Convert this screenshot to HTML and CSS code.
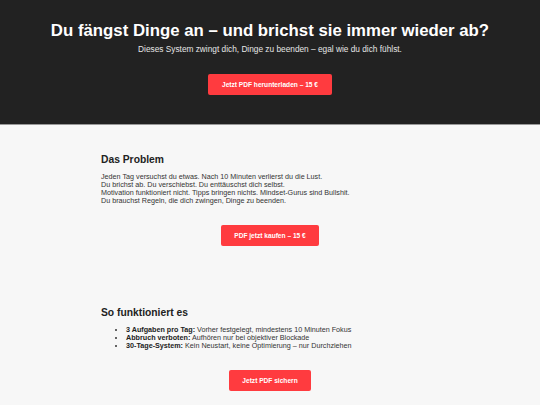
FILE: index.html
```html
<!DOCTYPE html>
<html lang="de">
  <head>
    <meta charset="UTF-8" />
    <meta name="viewport" content="width=device-width, initial-scale=1.0" />
    <title>Dinge beenden</title>
    <link rel="stylesheet" href="styles.css">
  </head>
  <body>
    <header class="hero">
      <h1>Du fängst Dinge an – und brichst sie immer wieder ab?</h1>
      <p class="hero-sub">Dieses System zwingt dich, Dinge zu beenden – egal wie du dich fühlst.</p>
      <div class="cta">
        <a class="btn" href="#">Jetzt PDF herunterladen – 15 €</a>
      </div>
    </header>

    <section class="block">
      <div class="wrap">
        <h2>Das Problem</h2>
        <p class="text">
          Jeden Tag versuchst du etwas. Nach 10 Minuten verlierst du die Lust.<br />
          Du brichst ab. Du verschiebst. Du enttäuschst dich selbst.<br />
          Motivation funktioniert nicht. Tipps bringen nichts. Mindset-Gurus sind Bullshit.<br />
          Du brauchst Regeln, die dich zwingen, Dinge zu beenden.
        </p>
        <div class="cta">
          <a class="btn" href="#">PDF jetzt kaufen – 15 €</a>
        </div>
      </div>
    </section>

    <section class="block">
      <div class="wrap">
        <h2>So funktioniert es</h2>
        <ul class="list">
          <li><strong>3 Aufgaben pro Tag:</strong> Vorher festgelegt, mindestens 10 Minuten Fokus</li>
          <li><strong>Abbruch verboten:</strong> Aufhören nur bei objektiver Blockade</li>
          <li><strong>30-Tage-System:</strong> Kein Neustart, keine Optimierung – nur Durchziehen</li>
        </ul>
        <div class="cta">
          <a class="btn" href="#">Jetzt PDF sichern</a>
        </div>
      </div>
    </section>
  </body>
</html>
```

FILE: styles.css
```css
* {
  margin: 0;
  padding: 0;
  box-sizing: border-box;
}
body {
  font-family: "Liberation Sans", Arial, sans-serif;
  background: #f7f7f7;
  color: #222;
}

.hero {
  background: #222;
  color: #fff;
  text-align: center;
  padding: 21px 0 29px;
  border-bottom: 1px solid #999;
}
.hero h1 {
  font-size: 16.8px;
  line-height: 20px;
}
.hero-sub {
  font-size: 8.3px;
  line-height: 9px;
  margin: 4px 0 20px;
  color: #e6e6e6;
}

.cta {
  display: flex;
  justify-content: center;
}
.block .cta {
  margin-top: 20px;
}
.btn {
  display: block;
  background: #ff3b3f;
  color: #fff;
  font-size: 6.6px;
  font-weight: bold;
  line-height: 21px;
  padding: 0 13.5px;
  border-radius: 2px;
  text-decoration: none;
}

.block {
  padding: 28px 0 32px;
}
.wrap {
  max-width: 338px;
  margin: 0 auto;
}
.block h2 {
  font-size: 10.3px;
  line-height: 14px;
  margin-bottom: 6px;
}
.text {
  font-size: 7.2px;
  line-height: 8px;
  color: #333;
}
.list {
  font-size: 7.2px;
  line-height: 8px;
  color: #333;
  padding-left: 25px;
}
.list strong {
  color: #222;
}
```
